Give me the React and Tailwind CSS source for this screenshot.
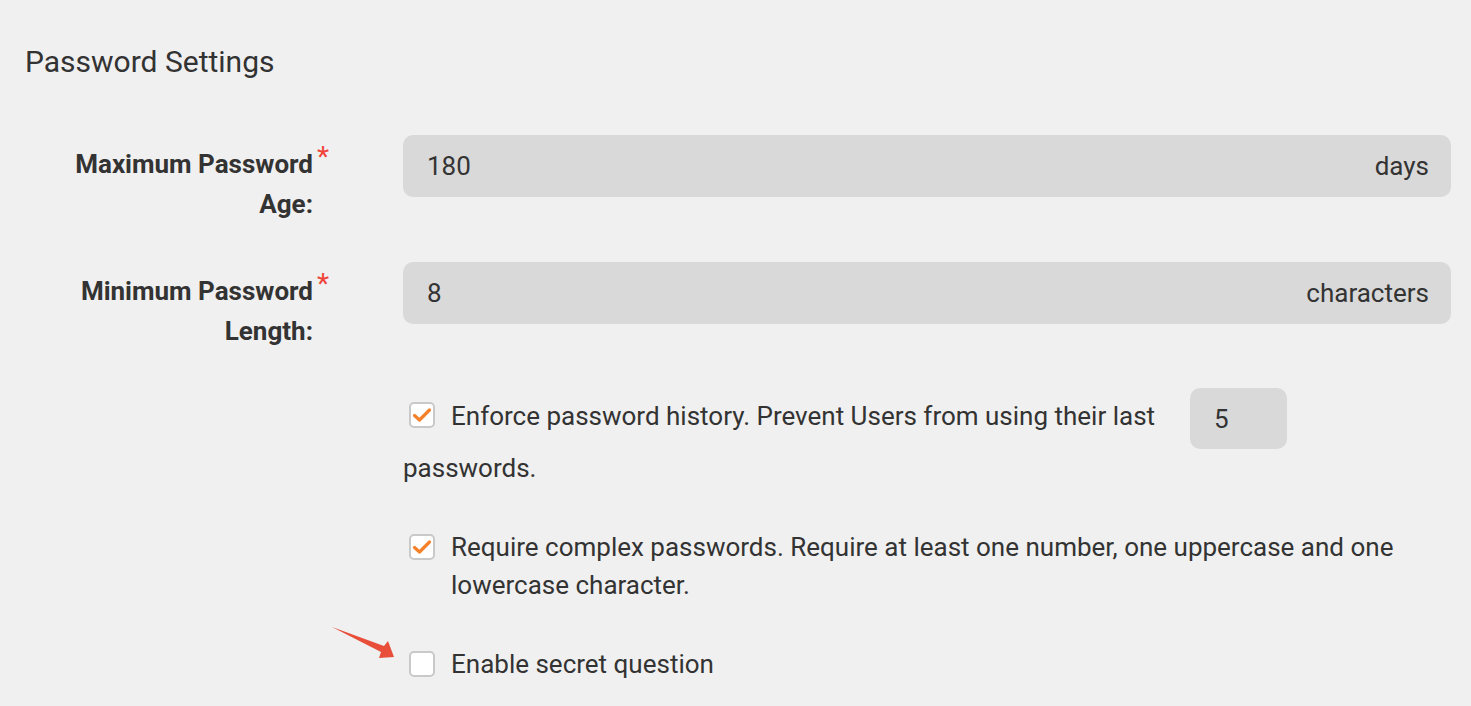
import React from "react";

const font = { fontFamily: "Roboto, 'Noto Sans', sans-serif" };

function Check({ checked }) {
  return (
    <span className="flex items-center justify-center w-[26px] h-[26px] rounded-[5px] border-2 border-[#c9c9c9] bg-white shrink-0">
      {checked && (
        <svg width="20" height="16" viewBox="0 0 20 16" fill="none">
          <path d="M2.5 8.5 L7.5 13 L17.5 3" stroke="#f5822a" strokeWidth="3.2" strokeLinecap="round" strokeLinejoin="round" />
        </svg>
      )}
    </span>
  );
}

function Label({ children }) {
  return (
    <div className="relative text-right font-bold text-[26px] leading-[40px] text-[#333] pt-[9px]">
      {children}
    </div>
  );
}

function Star() {
  return (
    <span className="absolute right-[-16px] top-[-6px] text-[#f0443a] text-[28px] leading-[28px] font-normal">*</span>
  );
}

export default function App() {
  return (
    <div className="min-h-screen w-full bg-[#f0f0f0] text-[#333]" style={font}>
      <div className="pl-[25px] pr-[20px] pt-[42px]">
        <h2 className="text-[30px] leading-[40px] font-normal text-[#333]">Password Settings</h2>

        <div className="mt-[53px] grid grid-cols-[288px_1fr] gap-x-[90px]">
          <div className="relative">
            <Label>
              <span className="relative">
                Maximum Password
                <Star />
              </span>
              <br />
              Age:
            </Label>
          </div>
          <div className="h-[62px] rounded-[10px] bg-[#d9d9d9] flex items-center justify-between pl-[24px] pr-[22px] text-[26px]">
            <span>180</span>
            <span>days</span>
          </div>
        </div>

        <div className="mt-[38px] grid grid-cols-[288px_1fr] gap-x-[90px]">
          <div className="relative">
            <Label>
              <span className="relative">
                Minimum Password
                <Star />
              </span>
              <br />
              Length:
            </Label>
          </div>
          <div className="h-[62px] rounded-[10px] bg-[#d9d9d9] flex items-center justify-between pl-[24px] pr-[22px] text-[26px]">
            <span>8</span>
            <span>characters</span>
          </div>
        </div>

        <div className="ml-[378px] mt-[37px] text-[26px]">
          <div className="leading-[38px]">
            <span className="inline-block overflow-hidden w-[26px] h-[26px] align-[-3px] ml-[6px] mr-[16px]">
              <Check checked />
            </span>
            <span>Enforce password history. Prevent Users from using their last</span>
            <span className="inline-flex items-center align-middle ml-[35px] w-[97px] h-[61px] rounded-[10px] bg-[#d9d9d9] pl-[24px]">5</span>
            <br />
            <span>passwords.</span>
          </div>

          <div className="mt-[41px] flex items-start leading-[38px]">
            <span className="ml-[6px] mr-[16px] mt-[6px] flex">
              <Check checked />
            </span>
            <span>Require complex passwords. Require at least one number, one uppercase and one lowercase character.</span>
          </div>

          <div className="relative mt-[41px] flex items-start leading-[38px]">
            <svg className="absolute left-[-72px] top-[-20px]" width="70" height="40" viewBox="0 0 70 40">
              <path d="M1 2 L53 21 L57 16 L63 32 L48 33 L50 27 Z" fill="#e84e3a" />
            </svg>
            <span className="ml-[6px] mr-[16px] mt-[6px] flex">
              <Check />
            </span>
            <span>Enable secret question</span>
          </div>
        </div>
      </div>
    </div>
  );
}
